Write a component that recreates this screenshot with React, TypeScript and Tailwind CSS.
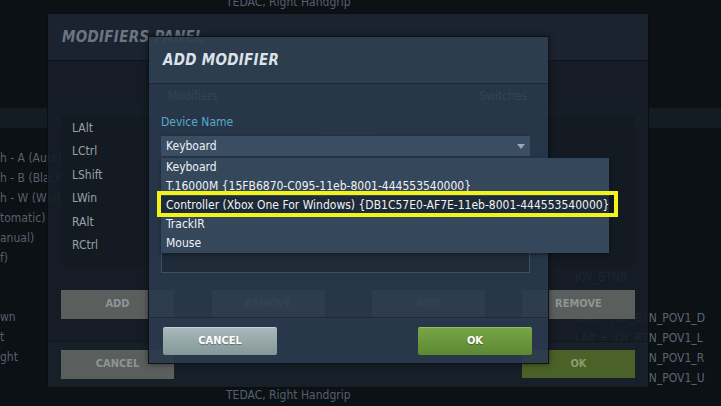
import type { ReactNode } from 'react';

const bgLeft = [
    'h - A (Auto)',
    'h - B (Black)',
    'h - W (White)',
    'tomatic)',
    'anual)',
    'f)',
];
const bgLeftLower = ['wn', 't', 'ght'];
const bgRight = [
    'JOY_BTN8',
    '',
    'LAlt + JOY_BTN_POV1_D',
    'LAlt + JOY_BTN_POV1_L',
    'LAlt + JOY_BTN_POV1_R',
    'LAlt + JOY_BTN_POV1_U',
];
const modifiers = ['LAlt', 'LCtrl', 'LShift', 'LWin', 'RAlt', 'RCtrl'];
const devices = [
    'Keyboard',
    'T.16000M {15FB6870-C095-11eb-8001-444553540000}',
    'Controller (Xbox One For Windows) {DB1C57E0-AF7E-11eb-8001-444553540000}',
    'TrackIR',
    'Mouse',
];

function Backdrop() {
    return (
        <div className="absolute inset-0 text-[12px] text-[#56606b]">
            <div className="absolute left-0 right-0 top-[108px] h-[20px] bg-[#131b23]" />
            <div className="absolute left-[226px] top-[-6px] leading-[16px]">
                TEDAC, Right Handgrip
            </div>
            <div className="absolute left-[226px] top-[387px] leading-[16px]">
                TEDAC, Right Handgrip
            </div>
            <div className="absolute left-0 top-[148px] flex flex-col leading-[20px]">
                {bgLeft.map((t) => (
                    <span key={t}>{t}</span>
                ))}
            </div>
            <div className="absolute left-0 top-[307px] flex flex-col leading-[20px]">
                {bgLeftLower.map((t) => (
                    <span key={t}>{t}</span>
                ))}
            </div>
            <div className="absolute left-[575px] top-[267px] flex flex-col leading-[20.3px] text-[#5b6570]">
                {bgRight.map((t, i) => (
                    <span key={i} className="h-[20.3px] whitespace-nowrap">
                        {t}
                    </span>
                ))}
            </div>
        </div>
    );
}

function PanelButton({
    children,
    tone = 'gray',
}: {
    children: ReactNode;
    tone?: 'gray' | 'green';
}) {
    return (
        <div
            className={
                tone === 'green'
                    ? 'flex h-[28px] w-[113px] items-center justify-center bg-[#4a6127] text-[11px] font-bold text-[#8c9b72]'
                    : 'flex h-[29px] w-[113px] items-center justify-center bg-[#5a5f5e] text-[11px] font-bold text-[#8f9594]'
            }
        >
            {children}
        </div>
    );
}

function PanelColumn({
    label,
    items,
}: {
    label: string;
    items: string[];
}) {
    return (
        <div className="flex flex-col">
            <div className="mb-[13px] h-[14px] text-center text-[12px] leading-[14px] text-[#8b96a1]">
                {label}
            </div>
            <div className="flex h-[150px] flex-col bg-[#131a22] pt-px pl-[11px]">
                {items.map((m) => (
                    <span
                        key={m}
                        className="text-[12px] leading-[23.4px] text-[#98a1aa]"
                    >
                        {m}
                    </span>
                ))}
            </div>
            <div className="mt-[24px] flex justify-between">
                <PanelButton>ADD</PanelButton>
                <PanelButton>REMOVE</PanelButton>
            </div>
        </div>
    );
}

function ModifiersPanel() {
    return (
        <div className="absolute left-[47px] top-[13px] flex h-[375px] w-[602px] flex-col border border-[#0a0e12] bg-[#161e27]/90">
            <div className="flex h-[47px] shrink-0 items-center border-b border-[#0d1318] bg-[#1b2430]/95 px-[14px]">
                <span className="text-[15px] font-bold italic tracking-[0.3px] text-[#6b7682]">
                    MODIFIERS PANEL
                </span>
            </div>
            <div className="grid flex-1 grid-cols-2 gap-[47px] px-[13px] pt-[28px]">
                <PanelColumn label="Modifiers" items={modifiers} />
                <PanelColumn label="Switches" items={[]} />
            </div>
            <div className="flex h-[46px] shrink-0 justify-between border-t border-[#10161c] bg-[#17202a]/90 px-[13px] pt-[8px]">
                <PanelButton>CANCEL</PanelButton>
                <PanelButton tone="green">OK</PanelButton>
            </div>
        </div>
    );
}

function DialogButton({
    children,
    tone,
}: {
    children: ReactNode;
    tone: 'gray' | 'green';
}) {
    return (
        <div
            className={
                tone === 'green'
                    ? 'flex h-[28px] w-[114px] items-center justify-center rounded-[2px] border-t border-[#93bd62] bg-gradient-to-b from-[#77a545] to-[#5c8832] text-[11px] font-bold text-white [text-shadow:0_1px_1px_rgba(0,0,0,0.35)]'
                    : 'flex h-[28px] w-[114px] items-center justify-center rounded-[2px] border-t border-[#c3cfd0] bg-gradient-to-b from-[#a9b8ba] to-[#849799] text-[11px] font-bold text-white [text-shadow:0_1px_1px_rgba(0,0,0,0.35)]'
            }
        >
            {children}
        </div>
    );
}

function DeviceSelect() {
    return (
        <div className="relative">
            <div className="flex h-[21px] w-[369px] items-center justify-between border-t border-[#24313e] bg-[#3a4d62] pr-[5px] pl-[5px] text-[12px] text-[#eef2f5]">
                <span>Keyboard</span>
                <svg width="8" height="5" viewBox="0 0 8 5" aria-hidden>
                    <path d="M0 0h8L4 5z" fill="#9aa8b6" />
                </svg>
            </div>
            <div className="absolute left-0 top-[calc(100%+2px)] z-10 flex w-[448px] flex-col bg-[#34475b] shadow-[0_2px_4px_rgba(0,0,0,0.35)]">
                {devices.map((d, i) => (
                    <div
                        key={d}
                        className={
                            i === 2
                                ? 'relative h-[19px] bg-[#1e2a37] pl-[5px] text-[12px] leading-[19px] whitespace-nowrap text-[#eef2f5]'
                                : 'relative h-[19px] pl-[5px] text-[12px] leading-[19px] whitespace-nowrap text-[#eef2f5]'
                        }
                    >
                        {d}
                        {i === 2 && (
                            <div className="absolute top-[-5px] right-[-9px] bottom-[-2px] left-[-4px] border-4 border-[#f3f31c]" />
                        )}
                    </div>
                ))}
            </div>
        </div>
    );
}

function AddModifierDialog() {
    return (
        <div className="absolute left-[148px] top-[36px] flex h-[328px] w-[401px] flex-col border border-[#0d1318] shadow-[0_0_6px_rgba(0,0,0,0.5)]">
            <div className="flex h-[47px] shrink-0 items-center border-b border-[#1c2732] bg-[#2e3f51]/[0.93] pl-[14px]">
                <span className="text-[15px] font-bold italic tracking-[0.3px] text-[#dbe2e8]">
                    ADD MODIFIER
                </span>
            </div>
            <div className="flex flex-1 flex-col bg-[#293a4c]/[0.9] pt-[31px] pr-[18px] pl-[12px]">
                <span className="h-[14px] text-[12px] leading-[14px] text-[#5ba9c9]">
                    Device Name
                </span>
                <div className="mt-[6px]">
                    <DeviceSelect />
                </div>
                <div className="mt-[6px] h-[111px] w-[369px] border border-[#3d5065] bg-[#1f2b38]" />
            </div>
            <div className="flex h-[46px] shrink-0 items-start justify-between border-t border-[#1e2a36] bg-[#2a3b4d]/[0.92] pt-[9px] pr-[16px] pl-[14px]">
                <DialogButton tone="gray">CANCEL</DialogButton>
                <DialogButton tone="green">OK</DialogButton>
            </div>
        </div>
    );
}

export default function App() {
    return (
        <div className="relative h-[406px] w-[721px] overflow-hidden bg-[#0c1116] font-['DejaVu_Sans_Condensed','DejaVu_Sans',sans-serif]">
            <Backdrop />
            <ModifiersPanel />
            <AddModifierDialog />
        </div>
    );
}
